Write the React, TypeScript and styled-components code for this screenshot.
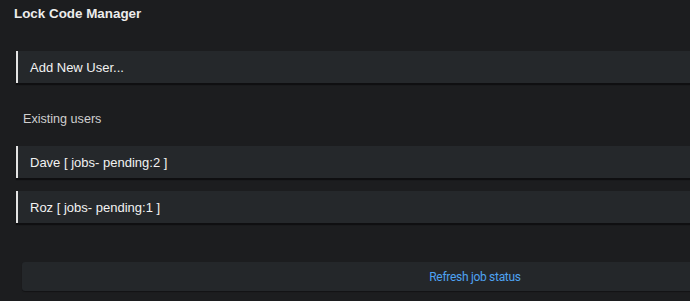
import React from "react";
import styled, { createGlobalStyle } from "styled-components";

const Global = createGlobalStyle`
  html, body {
    margin: 0;
    padding: 0;
    background: #1c1d1f;
    overflow: hidden;
  }
  body {
    font-family: "Liberation Sans", Arial, sans-serif;
  }
`;

const Page = styled.div`
  display: flex;
  flex-direction: column;
  align-items: flex-start;
  width: 690px;
  height: 301px;
  overflow: hidden;
`;

const Title = styled.h1`
  margin: 6px 0 0 14px;
  font-size: 13.4px;
  line-height: 16px;
  font-weight: 700;
  color: #ececec;
`;

const Row = styled.div<{ $top: number }>`
  flex: none;
  box-sizing: border-box;
  margin: ${(p) => p.$top}px 0 0 16px;
  width: 1000px;
  height: 32px;
  display: flex;
  align-items: center;
  padding-left: 12px;
  background: #25282b;
  border-left: 2px solid #e4e4e4;
  box-shadow: 0 2px 1px rgba(0, 0, 0, 0.45);
  font-size: 13px;
  color: #f2f2f2;
`;

const SectionLabel = styled.div`
  margin: 28px 0 0 23px;
  font-size: 12.6px;
  line-height: 16px;
  color: #cfcfcf;
`;

const UserList = styled.div`
  display: flex;
  flex-direction: column;
  gap: 13px;
  margin-top: 19px;
`;

const RefreshBar = styled.div`
  flex: none;
  margin: 39px 0 0 22px;
  width: 906px;
  height: 29px;
  border-radius: 3px;
  background: #24272a;
  box-shadow: 0 1px 1px rgba(0, 0, 0, 0.35);
  display: flex;
  align-items: center;
  justify-content: center;
`;

const RefreshLink = styled.span`
  font-family: Roboto, "Liberation Sans", sans-serif;
  font-size: 12px;
  letter-spacing: -0.3px;
  color: #4ea3f2;
`;

const users = [
  { name: "Dave", pending: 2 },
  { name: "Roz", pending: 1 },
];

export default function App() {
  return (
    <>
      <Global />
      <Page>
        <Title>Lock Code Manager</Title>
        <Row $top={29}>Add New User...</Row>
        <SectionLabel>Existing users</SectionLabel>
        <UserList>
          {users.map((u) => (
            <Row key={u.name} $top={0}>
              {u.name} [ jobs- pending:{u.pending} ]
            </Row>
          ))}
        </UserList>
        <RefreshBar>
          <RefreshLink>Refresh job status</RefreshLink>
        </RefreshBar>
      </Page>
    </>
  );
}
